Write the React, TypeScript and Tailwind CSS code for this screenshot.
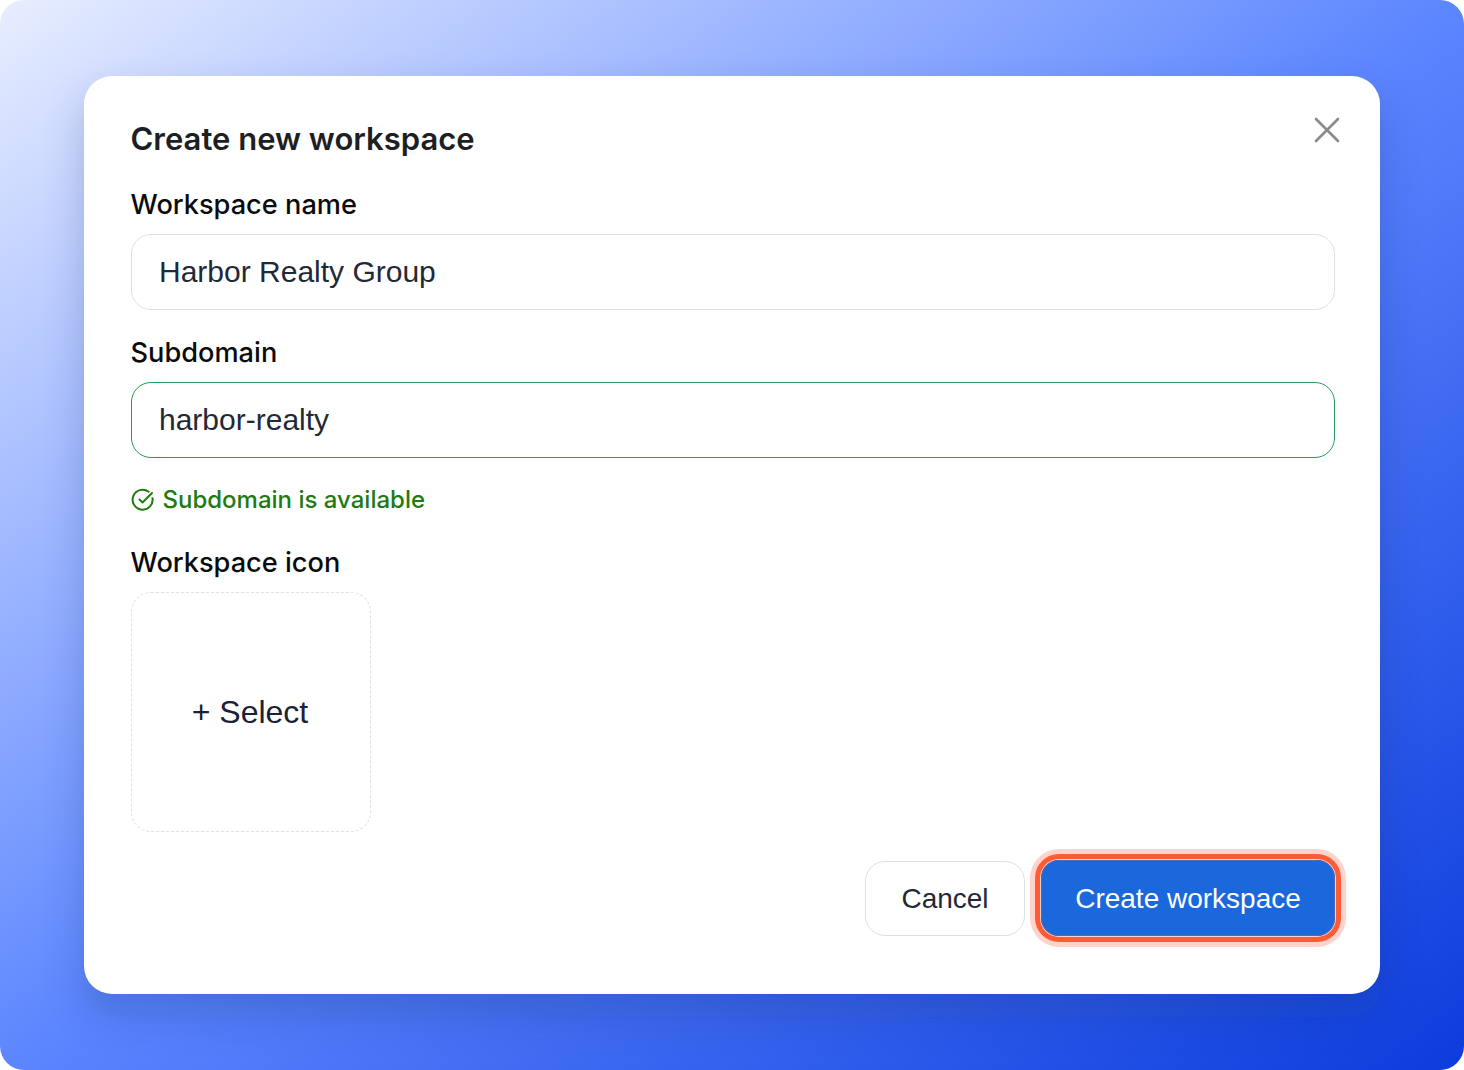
const sans = "font-['Inter','Liberation_Sans',sans-serif]";
const arial = "font-['Liberation_Sans',Arial,sans-serif]";

function Label({ children }: { children: string }) {
  return <div className={`${sans} -ml-[0.5px] text-[27.2px] leading-[34px] font-medium text-[#0b0b0c]`}>{children}</div>;
}

export default function App() {
  return (
    <div className="w-[1464px] h-[1070px] bg-white overflow-hidden">
      <div className="w-full h-full rounded-[24px] px-[84px] pt-[76px] bg-[linear-gradient(to_bottom_right,#e8eeff_0%,#5c86ff_50%,#0c3cdc_100%)]">
        <div className="relative h-[918px] rounded-[28px] bg-white pl-[47px] pr-[45px] pt-[44px] shadow-[0_23px_1px_rgba(70,140,170,0.05),0_20px_40px_rgba(20,40,110,0.22)]">
          <h1 className={`${sans} -ml-[0.5px] text-[31px] leading-[38px] font-semibold text-[#1d1f24]`}>Create new workspace</h1>
          <button className="absolute right-[39px] top-[40px] text-[#8a8a8a]">
            <svg width="28" height="28" viewBox="0 0 28 28" fill="none" stroke="currentColor" strokeWidth="2.6" strokeLinecap="round">
              <path d="M3 3L25 25M25 3L3 25" />
            </svg>
          </button>

          <div className="mt-[30px]">
            <Label>Workspace name</Label>
          </div>
          <div className={`${arial} mt-[12px] flex h-[76px] items-center rounded-[20px] border border-[#dfe0e3] pb-[2px] pl-[27px] text-[30px] text-[#1f2937]`}>
            Harbor Realty Group
          </div>

          <div className="mt-[26px]">
            <Label>Subdomain</Label>
          </div>
          <div className={`${arial} mt-[12px] flex h-[76px] items-center rounded-[20px] border border-[#279a58] pb-[2px] pl-[27px] text-[30px] text-[#1f2937]`}>
            harbor-realty
          </div>

          <div className="mt-[26px] flex items-center gap-[8px] text-[#217a10]">
            <svg width="24" height="24" viewBox="0 0 24 24" fill="none" stroke="currentColor" strokeWidth="2" strokeLinecap="round" strokeLinejoin="round">
              <path d="M21.5 10.2A10 10 0 1 1 17.6 3.7" />
              <path d="M8.5 11.5l3 3L21 5" />
            </svg>
            <span className={`${sans} -ml-[0.5px] text-[24px] leading-[32px] font-medium`}>Subdomain is available</span>
          </div>

          <div className="mt-[30px]">
            <Label>Workspace icon</Label>
          </div>
          <div className={`${arial} mt-[12px] flex h-[240px] w-[240px] items-center justify-center rounded-[20px] border border-dashed border-[#e0e1e4] pr-[2px] text-[32px] text-[#1a2233]`}>
            + Select
          </div>

          <div className="mt-[29px] flex items-start justify-end gap-[16px]">
            <button className={`${arial} h-[75px] w-[160px] rounded-[20px] border border-[#dfe0e3] bg-white text-[28px] text-[#1f2937]`}>
              Cancel
            </button>
            <button className={`${arial} -mt-px h-[76px] w-[294px] rounded-[18px] bg-[#1a68dc] pt-[2px] text-[28px] text-white shadow-[inset_0_0_0_1px_#4f6ab8,0_0_0_1px_#ffd0c8,0_0_0_6px_#ff5c35,0_0_0_11px_#ffd3cb]`}>
              Create workspace
            </button>
          </div>
        </div>
      </div>
    </div>
  );
}
